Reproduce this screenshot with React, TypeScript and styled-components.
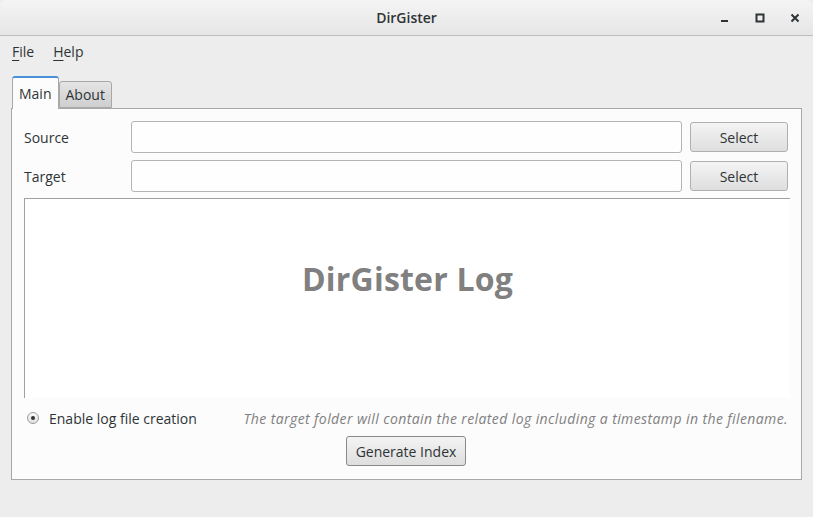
import React from "react";
import styled, { createGlobalStyle } from "styled-components";

const GlobalStyle = createGlobalStyle`
  html, body { margin: 0; padding: 0; }
  body {
    background: #ededed;
    font-family: "Open Sans", "Noto Sans", sans-serif;
    color: #2e3436;
  }
`;

const Window = styled.div`
  width: 813px;
  height: 517px;
  display: flex;
  flex-direction: column;
  background: #ededed;
  overflow: hidden;
`;

const TitleBar = styled.div`
  height: 35px;
  border-bottom: 1px solid #bdbdbd;
  background: linear-gradient(#f4f4f4, #e6e6e6);
  border-radius: 6px 6px 0 0;
  display: grid;
  grid-template-columns: 1fr auto 1fr;
  align-items: center;
`;

const Title = styled.div`
  grid-column: 2;
  font-size: 14px;
  font-weight: 600;
  color: #2e3436;
`;

const Controls = styled.div`
  grid-column: 3;
  justify-self: end;
  display: flex;
  align-items: center;
  padding-right: 1px;
`;

const CtlButton = styled.div`
  width: 35px;
  height: 24px;
  display: flex;
  align-items: center;
  justify-content: center;
`;

const MenuBar = styled.div`
  height: 30px;
  display: flex;
  align-items: center;
  gap: 19px;
  padding: 0 12px;
  font-size: 14px;
  color: #2e3436;
`;

const MenuItem = styled.span`
  & > u { text-decoration: underline; text-underline-offset: 3px; }
`;

const TabsArea = styled.div`
  padding: 10px 11px 0 11px;
  display: flex;
  flex-direction: column;
`;

const TabBar = styled.div`
  display: flex;
  align-items: flex-end;
  padding-left: 1px;
  height: 32px;
`;

const Tab = styled.div<{ $active?: boolean }>`
  font-size: 14px;
  display: flex;
  align-items: center;
  justify-content: center;
  box-sizing: border-box;
  height: ${(p) => (p.$active ? 33 : 27)}px;
  padding: 0 6px;
  margin-bottom: ${(p) => (p.$active ? -1 : 0)}px;
  border: 1px solid #a8a8a8;
  border-bottom: ${(p) => (p.$active ? "none" : "1px solid #a8a8a8")};
  border-top: ${(p) => (p.$active ? "2px solid #4a90d9" : "1px solid #a8a8a8")};
  border-radius: 3px 3px 0 0;
  background: ${(p) => (p.$active ? "#fcfcfc" : "linear-gradient(#e4e4e4, #cfcfcf)")};
  position: relative;
  z-index: ${(p) => (p.$active ? 1 : 0)};
`;

const Pane = styled.div`
  height: 372px;
  box-sizing: border-box;
  border: 1px solid #a8a8a8;
  background: #fcfcfc;
  padding: 12px 13px 13px 12px;
  display: flex;
  flex-direction: column;
`;

const FieldRow = styled.div`
  display: grid;
  grid-template-columns: 107px 1fr 98px;
  column-gap: 8px;
  align-items: center;
  margin-bottom: 7px;
  & > :nth-child(2) { margin-left: -8px; }
`;

const Label = styled.label`
  font-size: 14px;
  color: #2e3436;
`;

const TextInput = styled.input`
  height: 32px;
  box-sizing: border-box;
  border: 1px solid #b4b4b4;
  border-radius: 3px;
  background: #fefefe;
  outline: none;
  font: inherit;
`;

const Button = styled.button`
  height: 30px;
  box-sizing: border-box;
  border: 1px solid #b0b0b0;
  border-radius: 3px;
  background: linear-gradient(#f4f4f4, #dedede);
  font-family: "Open Sans", "Noto Sans", sans-serif;
  font-size: 14px;
  color: #2e3436;
  padding: 0 8px;
`;

const LogArea = styled.div`
  height: 201px;
  margin-top: -1px;
  margin-right: -2px;
  border-top: 1px solid #a0a0a0;
  border-left: 1px solid #a0a0a0;
  background: #ffffff;
  display: flex;
  align-items: center;
  justify-content: center;
`;

const LogTitle = styled.div`
  font-size: 32px;
  font-weight: 700;
  color: #808080;
  margin-top: -40px;
  letter-spacing: 0.2px;
`;

const OptionRow = styled.div`
  display: flex;
  align-items: center;
  margin-top: 10px;
  height: 20px;
`;

const Radio = styled.span`
  width: 12px;
  height: 12px;
  box-sizing: border-box;
  border: 1px solid #9a9a9a;
  border-radius: 50%;
  background: linear-gradient(#fafafa, #e0e0e0);
  display: inline-flex;
  align-items: center;
  justify-content: center;
  margin-left: 3px;
  margin-right: 10px;
  &::after {
    content: "";
    width: 4px;
    height: 4px;
    border-radius: 50%;
    background: #2e3436;
  }
`;

const OptionLabel = styled.span`
  font-size: 14px;
  color: #2e3436;
`;

const Hint = styled.span`
  margin-left: auto;
  font-size: 14px;
  font-style: italic;
  letter-spacing: 0.4px;
  color: #808080;
`;

const Footer = styled.div`
  display: flex;
  justify-content: center;
  margin-top: 8px;
`;

const GenButton = styled(Button)`
  height: 30px;
  padding: 0 9px;
  border-color: #8a8a8a;
`;

export default function App() {
  return (
    <>
      <GlobalStyle />
      <Window>
        <TitleBar>
          <Title>DirGister</Title>
          <Controls>
            <CtlButton>
              <svg width="10" height="10" viewBox="0 0 10 10">
                <rect x="1" y="7" width="7" height="2" fill="#2e3436" />
              </svg>
            </CtlButton>
            <CtlButton>
              <svg width="10" height="10" viewBox="0 0 10 10">
                <rect x="1.5" y="1.5" width="7" height="7" fill="none" stroke="#2e3436" strokeWidth="2" />
              </svg>
            </CtlButton>
            <CtlButton>
              <svg width="10" height="10" viewBox="0 0 10 10">
                <path d="M1.5 1.5 L8.5 8.5 M8.5 1.5 L1.5 8.5" stroke="#2e3436" strokeWidth="2" />
              </svg>
            </CtlButton>
          </Controls>
        </TitleBar>
        <MenuBar>
          <MenuItem><u>F</u>ile</MenuItem>
          <MenuItem><u>H</u>elp</MenuItem>
        </MenuBar>
        <TabsArea>
          <TabBar>
            <Tab $active>Main</Tab>
            <Tab>About</Tab>
          </TabBar>
          <Pane>
            <FieldRow>
              <Label>Source</Label>
              <TextInput />
              <Button>Select</Button>
            </FieldRow>
            <FieldRow>
              <Label>Target</Label>
              <TextInput />
              <Button>Select</Button>
            </FieldRow>
            <LogArea>
              <LogTitle>DirGister Log</LogTitle>
            </LogArea>
            <OptionRow>
              <Radio />
              <OptionLabel>Enable log file creation</OptionLabel>
              <Hint>The target folder will contain the related log including a timestamp in the filename.</Hint>
            </OptionRow>
            <Footer>
              <GenButton>Generate Index</GenButton>
            </Footer>
          </Pane>
        </TabsArea>
      </Window>
    </>
  );
}
